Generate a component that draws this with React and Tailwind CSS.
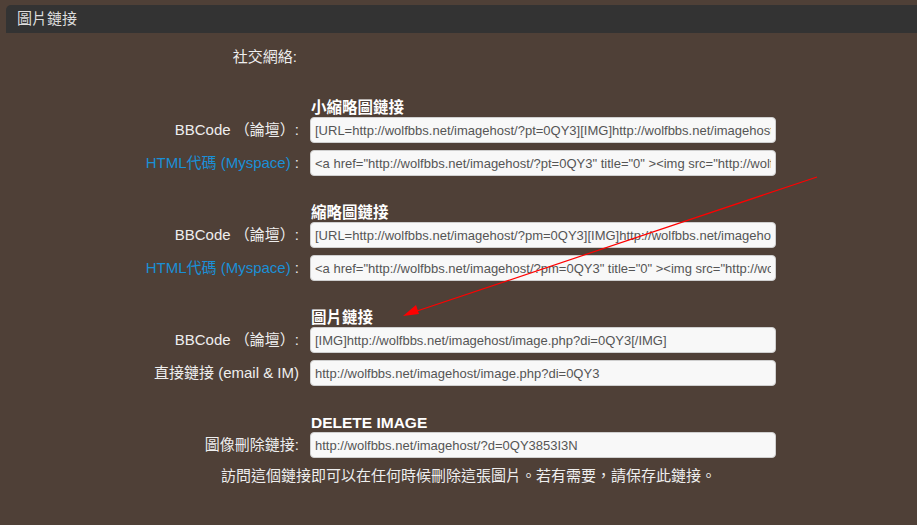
import React from 'react'

const font = { fontFamily: '"Liberation Sans", "Noto Sans CJK TC", sans-serif' }

function Field({ label, value, blue }) {
  return (
    <div className="flex h-[26px] items-center">
      <div className="w-[294px] pr-[1px] text-right text-[15px] text-[#eeeeee]">
        {blue ? (
          <>
            <span className="text-[#1a8fd6]">{blue}</span> :
          </>
        ) : (
          label
        )}
      </div>
      <input
        readOnly
        value={value}
        className="ml-[10px] h-[26px] w-[466px] rounded-[4px] border border-[#cfcfcf] bg-[#f8f8f8] px-[4px] text-[13px] text-[#555555] outline-none"
        style={font}
      />
    </div>
  )
}

function SectionTitle({ children, top }) {
  return (
    <div className={`${top} flex h-[18px] items-center pl-[305px] text-[15.5px] font-bold leading-none text-white`}>
      {children}
    </div>
  )
}

export default function App() {
  return (
    <div className="relative h-[525px] w-[917px] overflow-hidden bg-[#4f4037] pt-[5px]" style={font}>
      <div className="ml-[6px]">
        <div className="flex h-[28px] items-center rounded-tl-[5px] bg-[#333333] pl-[11px] text-[15px] text-[#dddddd]">
          圖片鏈接
        </div>

        <div className="mt-[14px] flex h-[20px] items-center">
          <div className="w-[291px] text-right text-[15px] text-[#eeeeee]">社交網絡:</div>
        </div>

        <SectionTitle top="mt-[32px]">小縮略圖鏈接</SectionTitle>
        <div className="flex flex-col gap-[7px]">
          <Field
            label="BBCode （論壇）:"
            value="[URL=http://wolfbbs.net/imagehost/?pt=0QY3][IMG]http://wolfbbs.net/imagehost/image.php?di=0QY3[/IMG][/URL]"
          />
          <Field
            blue="HTML代碼 (Myspace)"
            value={'<a href="http://wolfbbs.net/imagehost/?pt=0QY3" title="0" ><img src="http://wolfbbs.net/imagehost/image.php?di=0QY3" /></a>'}
          />
        </div>

        <SectionTitle top="mt-[28px]">縮略圖鏈接</SectionTitle>
        <div className="flex flex-col gap-[7px]">
          <Field
            label="BBCode （論壇）:"
            value="[URL=http://wolfbbs.net/imagehost/?pm=0QY3][IMG]http://wolfbbs.net/imagehost/image.php?di=0QY3[/IMG][/URL]"
          />
          <Field
            blue="HTML代碼 (Myspace)"
            value={'<a href="http://wolfbbs.net/imagehost/?pm=0QY3" title="0" ><img src="http://wolfbbs.net/imagehost/image.php?di=0QY3" /></a>'}
          />
        </div>

        <SectionTitle top="mt-[28px]">圖片鏈接</SectionTitle>
        <div className="flex flex-col gap-[7px]">
          <Field label="BBCode （論壇）:" value="[IMG]http://wolfbbs.net/imagehost/image.php?di=0QY3[/IMG]" />
          <Field label="直接鏈接 (email & IM)" value="http://wolfbbs.net/imagehost/image.php?di=0QY3" />
        </div>

        <SectionTitle top="mt-[28px]">DELETE IMAGE</SectionTitle>
        <Field label="圖像刪除鏈接:" value="http://wolfbbs.net/imagehost/?d=0QY3853I3N" />

        <div className="mt-[9px] flex h-[18px] items-center pl-[215px] text-[15px] text-[#eeeeee]">
          訪問這個鏈接即可以在任何時候刪除這張圖片。若有需要，請保存此鏈接。
        </div>
      </div>

      <svg className="pointer-events-none absolute left-0 top-0" width="917" height="525">
        <line x1="817" y1="177" x2="414" y2="312" stroke="#ff0000" strokeWidth="1.2" />
        <polygon points="403,316 416,305 419,314" fill="#ff0000" />
      </svg>
    </div>
  )
}
